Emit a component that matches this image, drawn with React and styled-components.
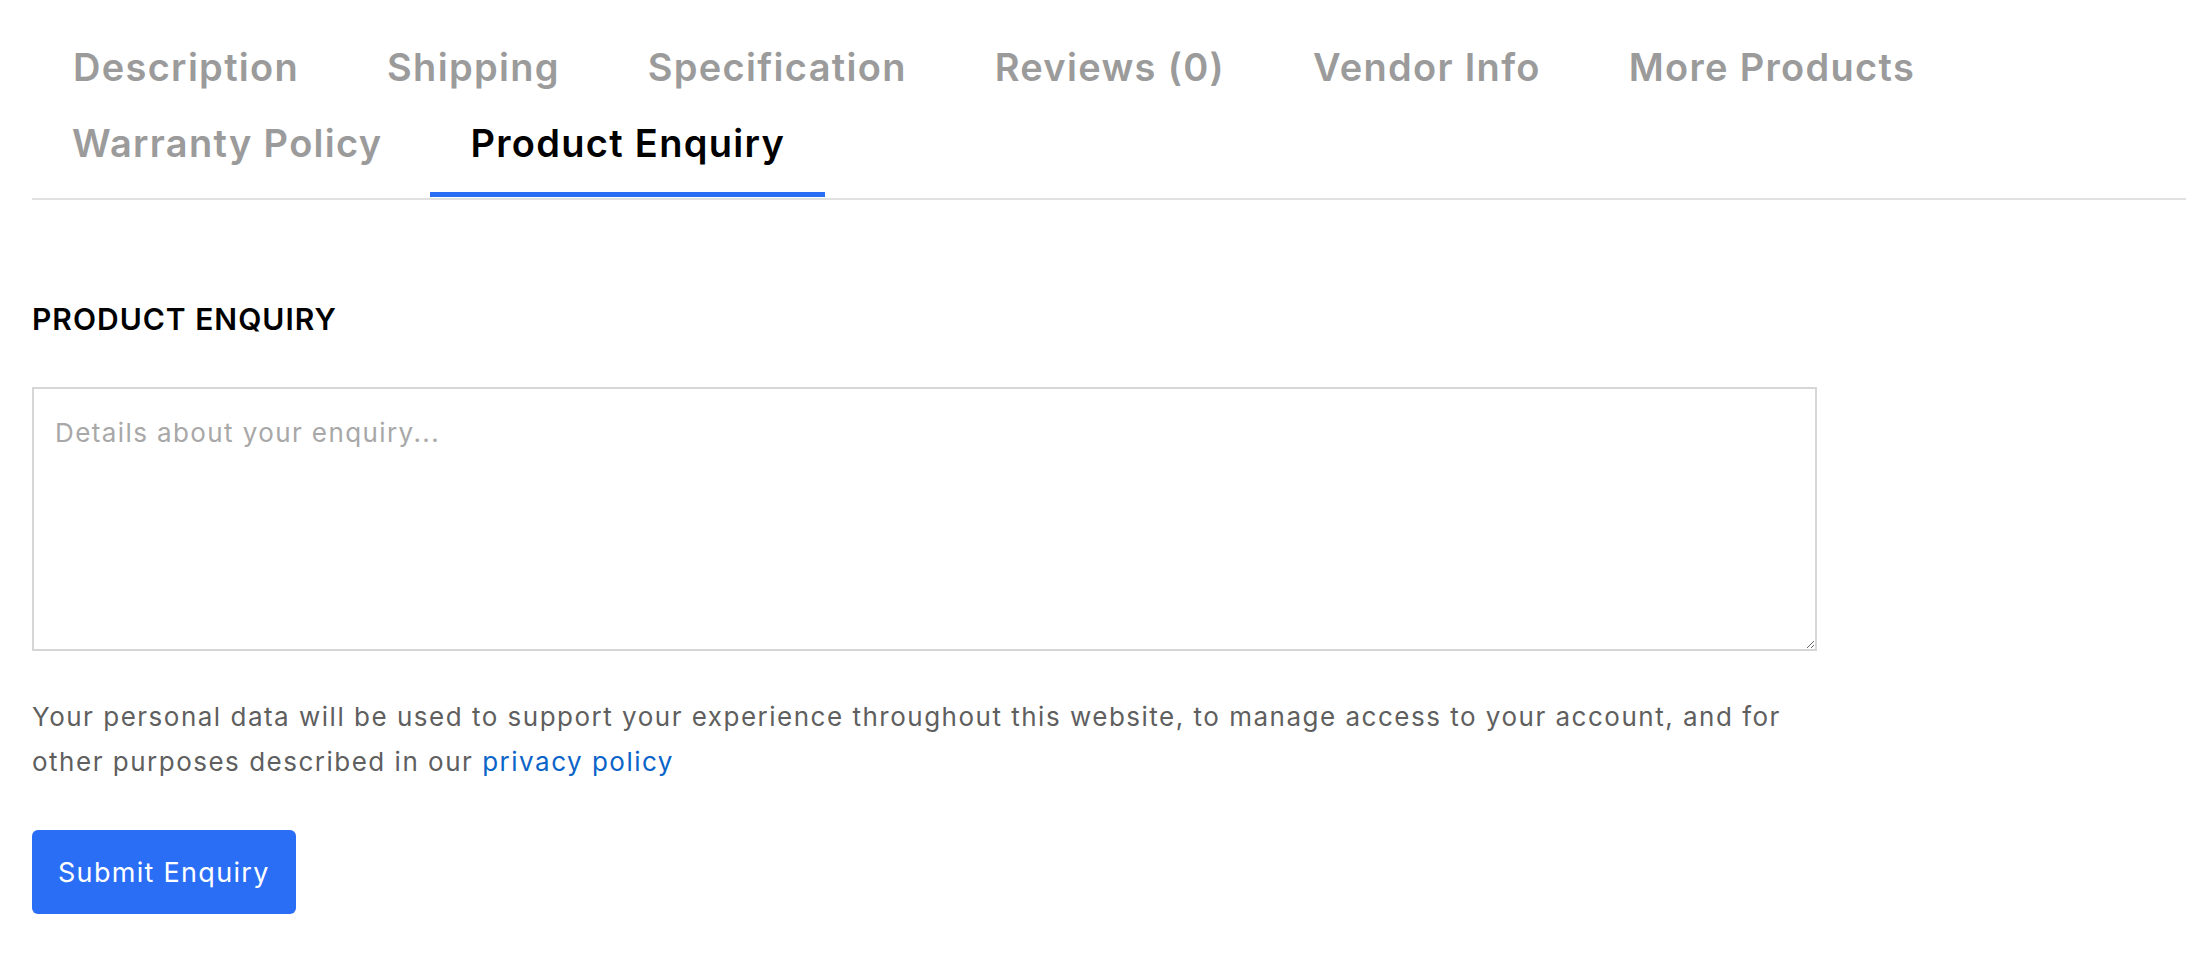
import { useState } from 'react';
import styled, { createGlobalStyle } from 'styled-components';

const GlobalStyle = createGlobalStyle`
    body {
        margin: 0;
        background: #fff;
        font-family: Inter, "Liberation Sans", sans-serif;
    }
`;

const TABS = [
    'Description',
    'Shipping',
    'Specification',
    'Reviews (0)',
    'Vendor Info',
    'More Products',
    'Warranty Policy',
    'Product Enquiry',
];

const Page = styled.div`
    padding: 45px 24px 40px 32px;
`;

const TabList = styled.ul`
    display: flex;
    flex-wrap: wrap;
    column-gap: 8px;
    list-style: none;
    margin: 0;
    padding: 0 0 1px 0;
    border-bottom: 2px solid #e1e1e1;
`;

const Tab = styled.li`
    height: 76px;
    box-sizing: border-box;
    padding: 2px 40px 0;
    font-size: 38px;
    line-height: 40px;
    font-weight: 600;
    letter-spacing: 1.3px;
    color: ${p => (p.$active ? '#000' : '#9b9b9b')};
    box-shadow: ${p => (p.$active ? 'inset 0 -5px 0 #2a6ef6' : 'none')};
    cursor: pointer;

    &:first-child {
        padding-left: 41px;
    }
`;

const Form = styled.form`
    width: 1785px;
    margin-top: 101px;
`;

const Heading = styled.h2`
    margin: 0 0 50px;
    font-size: 30px;
    line-height: 36px;
    font-weight: 600;
    letter-spacing: 1px;
    color: #000;
`;

const TextArea = styled.textarea`
    display: block;
    width: 100%;
    height: 264px;
    box-sizing: border-box;
    padding: 24px 21px 19px;
    border: 2px solid #d6d6d6;
    border-radius: 0;
    font-family: Inter, "Liberation Sans", sans-serif;
    font-size: 26px;
    line-height: 40px;
    letter-spacing: 1.4px;
    color: #333;
    outline: none;

    &::placeholder {
        color: #a8a8a8;
    }
`;

const Note = styled.p`
    margin: 44px 0 46px;
    font-size: 26px;
    line-height: 44.5px;
    letter-spacing: 1.5px;
    color: #5f5f5f;

    a {
        color: #0b64c8;
        text-decoration: none;
    }
`;

const SubmitButton = styled.button`
    height: 84px;
    padding: 0 26px;
    border: none;
    border-radius: 6px;
    background: #2a6ef6;
    color: #fff;
    font-family: Inter, "Liberation Sans", sans-serif;
    font-size: 27px;
    letter-spacing: 1.3px;
    cursor: pointer;

    &:hover {
        opacity: 0.9;
    }
`;

function App () {
    const [active, setActive] = useState('Product Enquiry')
    const [text, setText] = useState('')

    return (
        <Page>
            <GlobalStyle />
            <TabList>
                {TABS.map(tab =>
                    <Tab
                        key={tab}
                        $active={tab === active}
                        onClick={() => setActive(tab)}
                    >
                        {tab}
                    </Tab>
                )}
            </TabList>

            <Form onSubmit={e => e.preventDefault()}>
                <Heading>PRODUCT ENQUIRY</Heading>
                <TextArea
                    placeholder="Details about your enquiry..."
                    value={text}
                    onChange={e => setText(e.target.value)}
                />
                <Note>
                    Your personal data will be used to support your experience throughout this website, to manage access to your account, and for other purposes described in our <a href="#privacy">privacy policy</a>
                </Note>
                <SubmitButton type="submit">Submit Enquiry</SubmitButton>
            </Form>
        </Page>
    )
}

export default App;
